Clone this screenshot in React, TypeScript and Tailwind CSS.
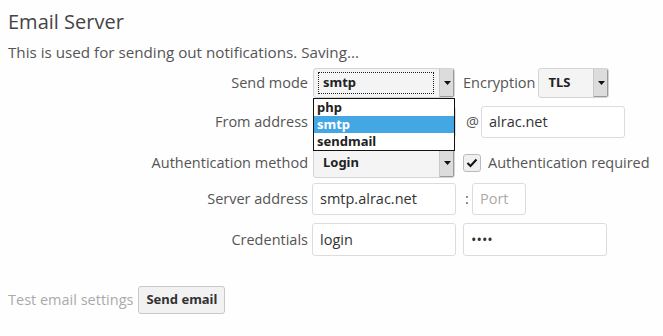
import React from "react";

const font = { fontFamily: "'Open Sans', 'Liberation Sans', sans-serif" };
const bold = { fontFamily: "'Noto Sans', 'DejaVu Sans', sans-serif" };

function Arrow() {
  return (
    <div className="flex h-full w-[15px] items-center justify-center border-l border-[#c8c8c8] bg-[#dcdcdc] shadow-[inset_-1px_-1px_0_#9a9a9a]">
      <svg width="7" height="4" viewBox="0 0 7 4">
        <polygon points="0,0 7,0 3.5,4" fill="#111" />
      </svg>
    </div>
  );
}

function Select({ value, w, focus }: { value: string; w: string; focus?: boolean }) {
  return (
    <div className={`flex h-[30px] ${w} items-stretch overflow-hidden rounded-[3px] border border-[#d4d4d4] bg-[#f4f4f4]`}>
      <div className="relative flex flex-1 items-center pl-[9px] text-[13px] font-bold text-[#222]" style={bold}>
        {focus && <div className="absolute left-[4px] right-[5px] top-[3px] bottom-[3px] border border-dotted border-[#222]" />}
        <span className="relative">{value}</span>
      </div>
      <Arrow />
    </div>
  );
}

function Input({ value, w, placeholder, h = "h-[32px]" }: { value?: string; w: string; placeholder?: string; h?: string }) {
  return (
    <div className={`flex ${h} ${w} items-center rounded-[3px] border border-[#dcdcdc] bg-white px-[7px] text-[14.5px] ${value ? "text-[#333]" : "text-[#aaa]"}`}>
      {value ?? placeholder}
    </div>
  );
}

function Label({ children }: { children: React.ReactNode }) {
  return <div className="w-[304px] shrink-0 pr-[4px] text-right text-[14.5px] text-[#555]">{children}</div>;
}

export default function App() {
  return (
    <div className="h-[336px] w-[663px] bg-[#fefefe] pl-[8px] pt-[8px] text-[#555]" style={font}>
      <div className="text-[20px] leading-[28px] text-[#444]">Email Server</div>
      <div className="mt-[6px] text-[15.2px] leading-[20px] text-[#555]">This is used for sending out notifications. Saving...</div>

      <div className="relative mt-[6px] flex flex-col">
        <div className="flex h-[30px] items-center">
          <Label>Send mode</Label>
          <div className="ml-[1px]">
            <Select value="smtp" w="w-[142px]" focus />
          </div>
          <div className="ml-[8px] text-[14.5px] text-[#555]">Encryption</div>
          <div className="ml-[3px]">
            <Select value="TLS" w="w-[71px]" />
          </div>
        </div>

        <div className="mt-[8px] flex h-[32px] items-center">
          <Label>From address</Label>
          <div className="ml-[1px]">
            <Input value="" w="w-[143px]" />
          </div>
          <div className="ml-[10px] w-[15px] text-[14.5px] text-[#555]">@</div>
          <Input value="alrac.net" w="w-[144px]" />
        </div>

        <div className="mt-[10px] flex h-[30px] items-center">
          <Label>Authentication method</Label>
          <div className="ml-[1px]">
            <Select value="Login" w="w-[142px]" />
          </div>
          <div className="ml-[8px] flex h-[18px] w-[18px] items-center justify-center rounded-[3px] border border-[#bbb] bg-[#f0f0f0]">
            <svg width="12" height="10" viewBox="0 0 12 10">
              <path d="M1.5 5 L4.5 8 L10.5 1.5" stroke="#111" strokeWidth="2" fill="none" />
            </svg>
          </div>
          <div className="ml-[7px] text-[14.5px] text-[#555]">Authentication required</div>
        </div>

        <div className="mt-[5px] flex h-[32px] items-center">
          <Label>Server address</Label>
          <Input value="smtp.alrac.net" w="w-[144px]" />
          <div className="ml-[9px] w-[7px] text-[14.5px] text-[#555]">:</div>
          <Input placeholder="Port" w="w-[54px]" />
        </div>

        <div className="mt-[8px] flex h-[33px] items-center">
          <Label>Credentials</Label>
          <Input value="login" w="w-[144px]" h="h-[33px]" />
          <div className="ml-[7px]">
            <Input value="••••" w="w-[144px]" h="h-[33px]" />
          </div>
        </div>

        <div className="absolute left-[305px] top-[30px] w-[142px] border border-[#111] bg-white text-[13px] font-bold text-[#222]" style={bold}>
          <div className="h-[17px] pl-[3px] leading-[17px]">php</div>
          <div className="h-[17px] bg-[#42a7e3] pl-[3px] leading-[17px] text-white">smtp</div>
          <div className="h-[17px] pl-[3px] leading-[17px]">sendmail</div>
        </div>
      </div>

      <div className="mt-[30px] flex items-center">
        <div className="text-[14.5px] text-[#aaa]">Test email settings</div>
        <div className="ml-[5px] flex h-[28px] items-center rounded-[3px] border border-[#c8c8c8] bg-[#f2f2f2] px-[7px] text-[13px] font-bold text-[#333]" style={bold}>
          Send email
        </div>
      </div>
    </div>
  );
}
